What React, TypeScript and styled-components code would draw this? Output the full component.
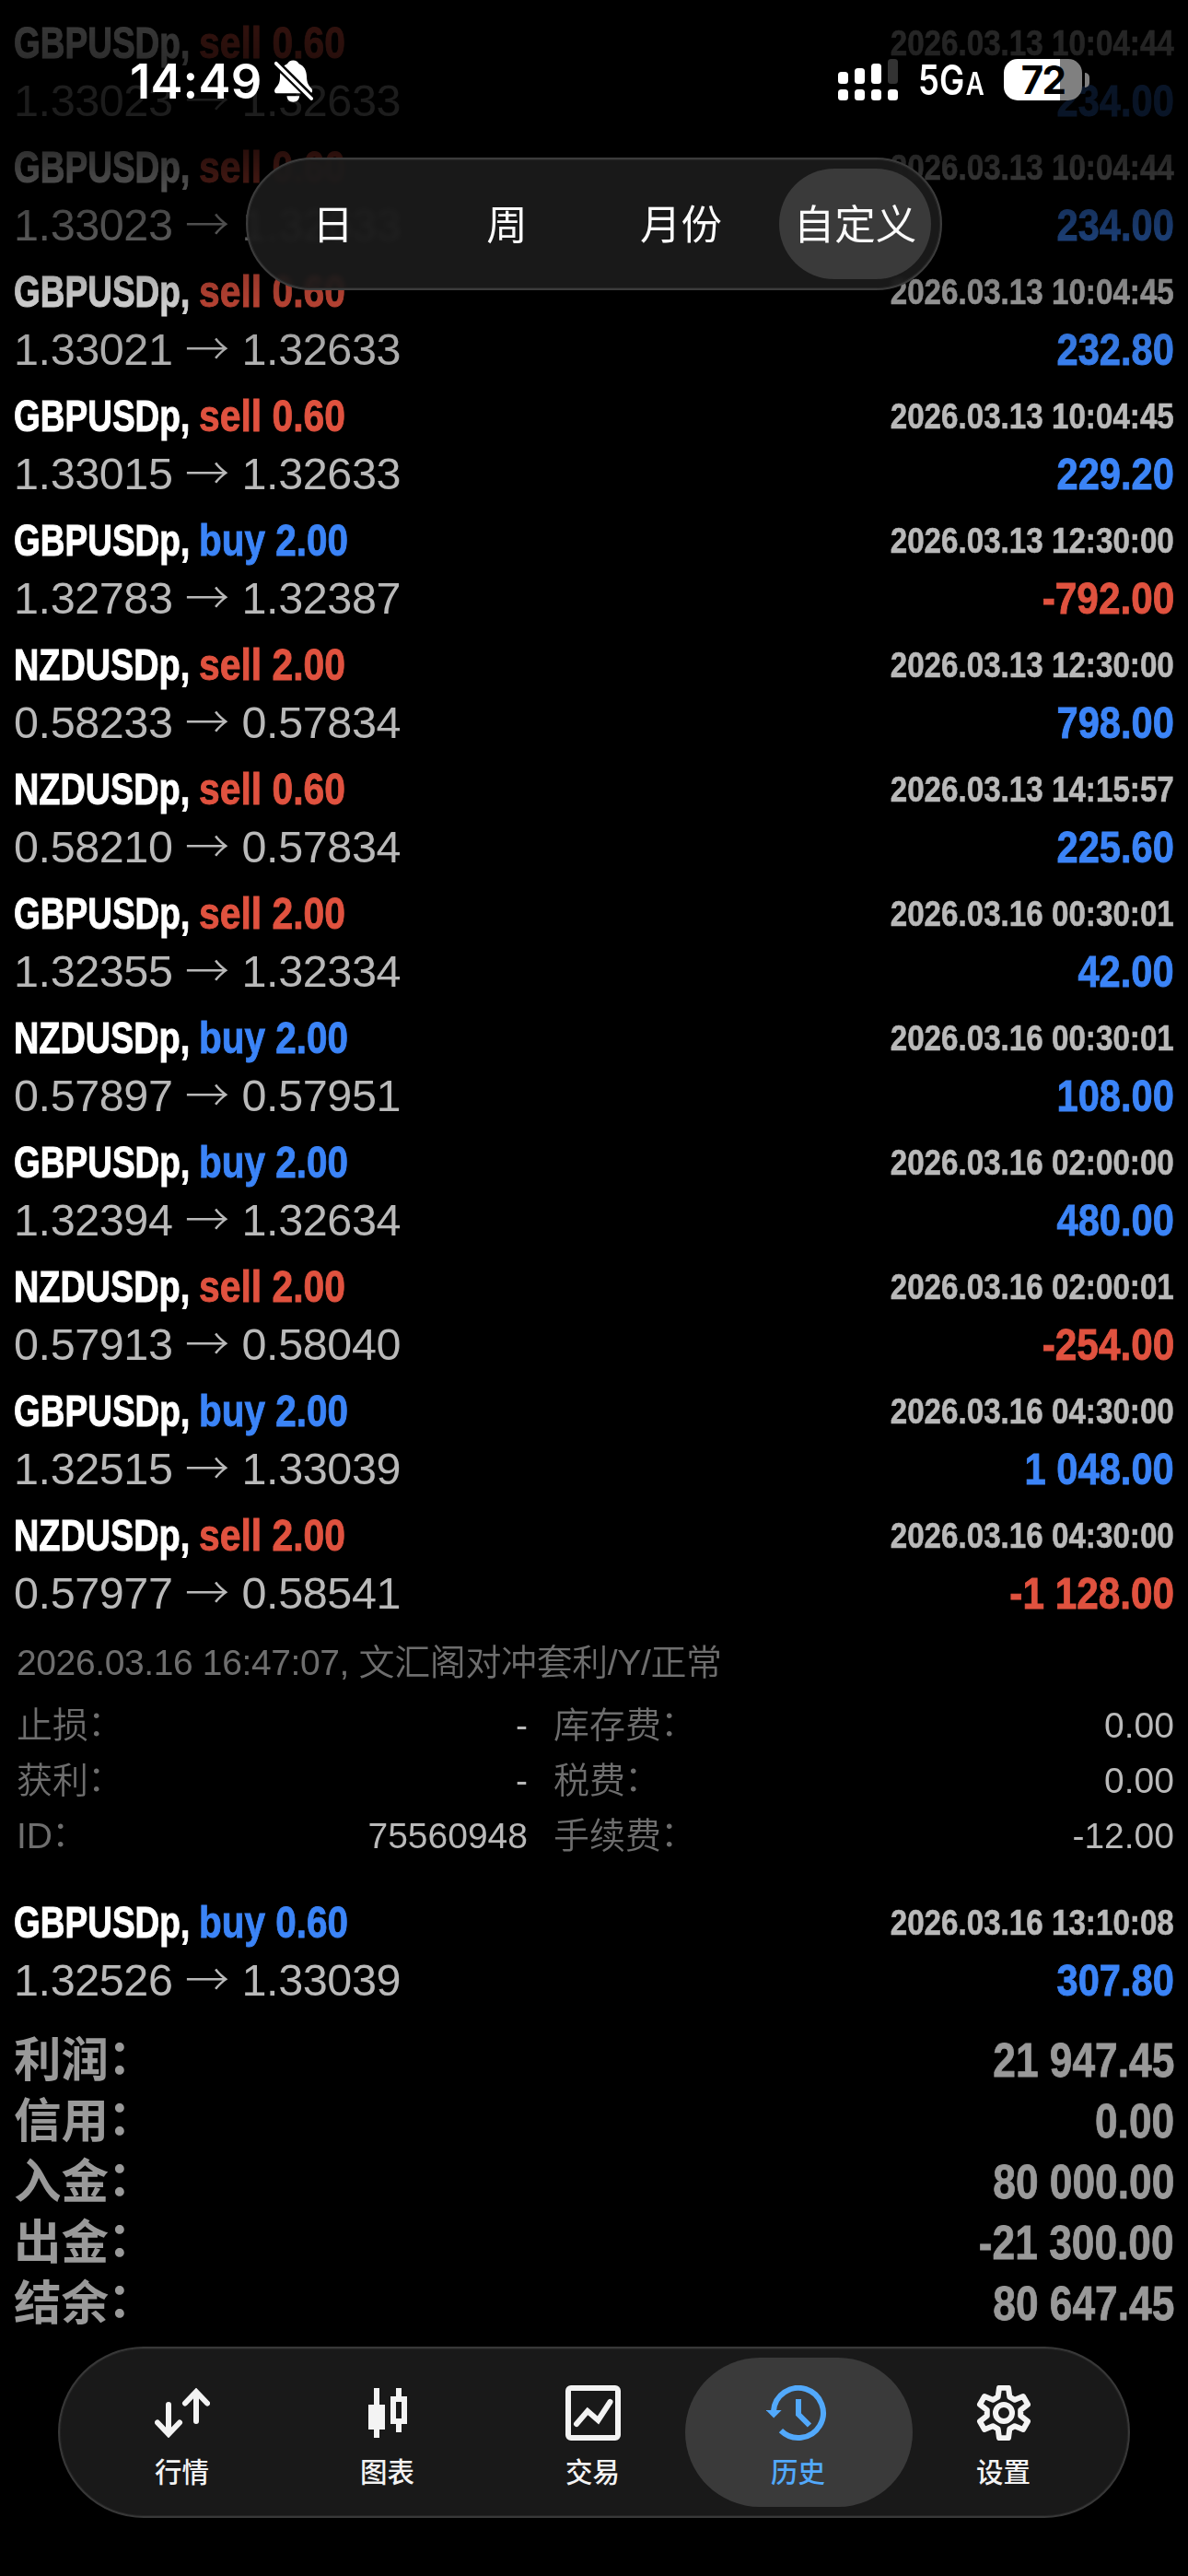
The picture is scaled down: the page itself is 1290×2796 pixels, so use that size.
import React from "react";
import styled, { createGlobalStyle } from "styled-components";

const sans = '"Liberation Sans", "Noto Sans CJK SC", sans-serif';
const cjk = '"Noto Sans CJK SC", sans-serif';
const system = 'Inter, "Noto Sans CJK SC", sans-serif';

const color = {
  sell: "#e0523f",
  buy: "#3b84f7",
  text: "#b9b9b9",
  label: "#6e6e6e",
  summary: "#999999",
  tab: "#f3f3f3",
  active: "#52a9fb",
};

const GlobalStyle = createGlobalStyle`
  body {
    margin: 0;
    background: #000;
  }
`;

const Screen = styled.div`
  position: relative;
  width: 1290px;
  height: 2796px;
  overflow: hidden;
  background: #000;
  font-family: ${sans};
`;

/* ---------- history list ---------- */

const History = styled.main`
  display: flex;
  flex-direction: column;
  padding: 14px 15px 0;
  mask-image: linear-gradient(
    to bottom,
    rgba(0, 0, 0, 0.24) 0,
    rgba(0, 0, 0, 0.18) 63px,
    rgba(0, 0, 0, 0.15) 110px,
    rgba(0, 0, 0, 0.19) 165px,
    rgba(0, 0, 0, 0.29) 198px,
    rgba(0, 0, 0, 0.48) 262px,
    rgba(0, 0, 0, 0.69) 300px,
    rgba(0, 0, 0, 0.83) 340px,
    rgba(0, 0, 0, 0.96) 396px,
    #000 430px
  );
`;

const Deal = styled.article`
  display: flex;
  flex-direction: column;
  height: 135px;
  padding-top: 1px;
  box-sizing: border-box;
`;

const Line = styled.div`
  display: flex;
  align-items: center;
  height: 63px;
  white-space: nowrap;
`;

const Condensed = styled.span<{ $scale: number }>`
  display: block;
  font-weight: 700;
  line-height: 63px;
  transform: scaleX(${(p) => p.$scale});
  transform-origin: left center;
`;

const SymbolCell = styled.div`
  width: 201px;
`;

const SymbolName = styled(Condensed)`
  width: max-content;
  font-size: 49px;
  color: #fff;
  -webkit-text-stroke: 1px #fff;
`;

const Side = styled(Condensed)<{ $tone: string }>`
  font-size: 49px;
  color: ${(p) => p.$tone};
  -webkit-text-stroke: 0.9px ${(p) => p.$tone};
`;

const Time = styled(Condensed)`
  margin-left: auto;
  font-size: 39.5px;
  color: ${color.text};
  -webkit-text-stroke: 0.6px ${color.text};
  transform-origin: right center;
`;

const Prices = styled.span`
  font-size: 48.5px;
  letter-spacing: -0.4px;
  line-height: 63px;
  color: ${color.text};
`;

const Arrow = styled.span`
  margin: 0 13.5px;
  font-family: ${cjk};
  font-size: 48px;
  font-weight: 300;
  line-height: 0;
  letter-spacing: 0;
`;

const Profit = styled(Condensed)<{ $tone: string }>`
  margin-left: auto;
  font-size: 49px;
  color: ${(p) => p.$tone};
  -webkit-text-stroke: 0.9px ${(p) => p.$tone};
  transform-origin: right center;
`;

/* ---------- expanded deal ---------- */

const Details = styled.section`
  height: 285px;
  padding: 0 0 0 3px;
  box-sizing: border-box;
  font-size: 39px;
  color: ${color.label};
`;

const Comment = styled.p`
  margin: 0 0 3px;
  height: 71px;
  line-height: 71px;
  font-weight: 350;
  letter-spacing: -0.38px;
  white-space: nowrap;
`;

const DetailGrid = styled.dl`
  display: grid;
  grid-template-columns: 555px 1fr;
  grid-auto-rows: 60px;
  column-gap: 28px;
  margin: 0;
  line-height: 60px;
`;

const DetailItem = styled.div`
  display: flex;
  justify-content: space-between;
`;

const DetailLabel = styled.dt`
  font-weight: 350;
`;

const DetailValue = styled.dd`
  margin: 0;
  color: ${color.text};
`;

const Colon = styled.span`
  margin-left: -1px;
  font-family: ${cjk};
  line-height: 0;
  vertical-align: 0.05em;
`;

/* ---------- totals ---------- */

const Totals = styled.section`
  padding-top: 14px;
`;

const TotalRow = styled.div`
  display: flex;
  justify-content: space-between;
  height: 66px;
  line-height: 66px;
  color: ${color.summary};
`;

const TotalLabel = styled.span`
  font-size: 51.5px;
  font-weight: 600;
`;

const TotalValue = styled(Condensed)`
  font-size: 52px;
  line-height: 66px;
  -webkit-text-stroke: 0.8px ${color.summary};
  transform-origin: right center;
`;

/* ---------- status bar ---------- */

const StatusBar = styled.header`
  position: absolute;
  top: 0;
  left: 0;
  right: 0;
  display: flex;
  justify-content: space-between;
  align-items: flex-start;
  padding: 64px 107px 0 141px;
  font-family: ${system};
  color: #fff;
`;

const Clock = styled.div`
  display: flex;
  align-items: center;
  height: 48px;
  gap: 14px;
  font-size: 52.5px;
  font-weight: 600;
  letter-spacing: 0.2px;
  line-height: 48px;
`;

const Indicators = styled.div`
  display: flex;
  align-items: center;
  height: 45px;
`;

const Network = styled.div`
  width: 92px;
  padding: 4px 0 0 22px;
  box-sizing: border-box;
`;

const NetworkText = styled.span`
  display: inline-block;
  font-size: 45px;
  font-weight: 560;
  line-height: 45px;
  transform: scaleX(0.81);
  transform-origin: left center;

  small {
    margin-left: 2px;
    font-size: 34px;
    font-weight: 640;
  }
`;

const Battery = styled.div`
  display: flex;
  align-items: center;
  gap: 3px;
  margin-left: 23px;
`;

const BatteryBody = styled.div`
  display: flex;
  align-items: center;
  justify-content: center;
  width: 85px;
  height: 45px;
  border-radius: 15px;
  background: linear-gradient(90deg, #fff 61px, #808080 61px);
  color: #000;
  font-size: 42px;
  font-weight: 700;
  letter-spacing: -1.6px;
`;

const BatteryTip = styled.div`
  width: 5px;
  height: 16px;
  border-radius: 0 8px 8px 0;
  background: #808080;
`;

/* ---------- period switch ---------- */

const PeriodSwitch = styled.nav`
  position: absolute;
  top: 171px;
  left: 267px;
  display: grid;
  grid-template-columns: repeat(4, 165px);
  column-gap: 24px;
  height: 144px;
  padding: 10px;
  box-sizing: border-box;
  border: 2px solid #3c3c3c;
  border-radius: 72px;
  background: rgba(28, 28, 28, 0.9);
  backdrop-filter: blur(3px);
  box-shadow: inset 0 0 0 1px #262626;
`;

const Period = styled.button<{ $active?: boolean }>`
  display: flex;
  align-items: center;
  justify-content: center;
  padding: 0 0 4px;
  border: 0;
  border-radius: 60px;
  background: ${(p) => (p.$active ? "#3a3a3a" : "transparent")};
  color: #fafafa;
  font: 400 44.5px/1 ${cjk};
  white-space: nowrap;
`;

/* ---------- tab bar ---------- */

const TabBar = styled.nav`
  position: absolute;
  top: 2547px;
  left: 63px;
  display: flex;
  width: 1164px;
  height: 186px;
  padding: 10px;
  box-sizing: border-box;
  border: 2px solid #383838;
  border-radius: 93px;
  background: #191919;
  box-shadow: inset 0 0 0 1px #242424;
`;

const Tab = styled.button<{ $active?: boolean }>`
  display: flex;
  flex: 0 0 247px;
  flex-direction: column;
  align-items: center;
  gap: 11px;
  margin: 0 -24px 0 0;
  padding: 27px 2px 0 0;
  border: 0;
  border-radius: 81px;
  background: ${(p) => (p.$active ? "#3a3a3a" : "transparent")};
  color: ${(p) => (p.$active ? color.active : color.tab)};
  font: 500 29.5px/36px ${cjk};
`;

const IconBox = styled.span`
  display: flex;
  align-items: center;
  justify-content: center;
  height: 66px;
`;

/* ---------- drawings ---------- */

const BellOff = () => (
  <svg width="42" height="47" viewBox="0 0 42 47">
    <path
      fill="#fff"
      d="M20.3.5C23.300 .5 25.500 2 26.700 4.200 32 6.400 34.800 11 35 18c.2 7 2 9.500 4.800 12.600C42.300 33.600 41 36.300 38 36.300H3C0 36.300-.8 33.500 1 31c3.500-4 5-6.500 5-13 0-7 3-11.600 8-13.800C15.200 2 17.300.5 20.300.5Z"
    />
    <path fill="#fff" d="M13.500 39.300h13.600c0 3.700-3 6.500-6.800 6.500s-6.800-2.800-6.800-6.500Z" />
    <path stroke="#000" strokeWidth="8.500" d="M0 2 42 43.500" />
    <path stroke="#fff" strokeWidth="3.800" strokeLinecap="round" d="M1.800 3.800 40.200 42" />
  </svg>
);

const Signal = () => (
  <svg width="65" height="45" viewBox="0 0 65 45" fill="#fff">
    <rect x="0" y="14" width="11" height="13" rx="3.500" />
    <rect x="18" y="10" width="11" height="17" rx="3.500" />
    <rect x="36" y="5" width="11" height="22" rx="3.500" />
    <rect x="54" y="0" width="11" height="27" rx="3.500" fill="#333" />
    {[0, 18, 36, 54].map((x) => (
      <rect key={x} x={x} y="33" width="11" height="12" rx="3.500" />
    ))}
  </svg>
);

const QuotesIcon = () => (
  <svg width="60" height="54" viewBox="0 0 60 54" fill="none" stroke="currentColor" strokeWidth="6" strokeLinecap="round">
    <path d="M15 18v30M3 37.500 15 50l12-12.500M45 36V6M33 16.500 45 4l12 12.500" />
  </svg>
);

const ChartIcon = () => (
  <svg width="42" height="54" viewBox="0 0 42 54" fill="currentColor">
    <path d="M6 0h6v18h6v27h-6v9H6v-9H0V18h6z" />
    <path fillRule="evenodd" d="M30 0h6v9h6v30h-6v9h-6v-9h-6V9h6zM30 15v18h6V15z" />
  </svg>
);

const TradeIcon = () => (
  <svg width="60" height="60" viewBox="0 0 60 60" fill="none" stroke="currentColor" strokeWidth="6">
    <rect x="3" y="3" width="54" height="54" rx="3" />
    <path strokeLinecap="round" d="M12 42 24 28 35.500 38 48.500 18" />
  </svg>
);

const HistoryIcon = () => (
  <svg width="70" height="60" viewBox="0 0 70 60" fill="none" stroke="currentColor" strokeWidth="6">
    <path d="M8 28A27 27 0 1 1 15.900 49.100" />
    <path d="M35 15v16.500l12 12" />
    <path fill="currentColor" stroke="none" d="M-.3 27h17L8.200 35.500z" />
  </svg>
);

const gearOutline = [0, 60, 120, 180, 240, 300]
  .flatMap((turn) =>
    [
      [-20, 18.5],
      [-10.5, 27.6],
      [10.5, 27.6],
      [20, 18.5],
    ].map(([offset, radius]) => {
      const a = ((turn + offset) * Math.PI) / 180;
      return `${(30 + radius * Math.sin(a)).toFixed(2)},${(30 - radius * Math.cos(a)).toFixed(2)}`;
    })
  )
  .join(" ");

const SettingsIcon = () => (
  <svg width="60" height="60" viewBox="0 0 60 60" fill="none" stroke="currentColor" strokeWidth="6">
    <polygon points={gearOutline} strokeLinejoin="round" />
    <circle cx="30" cy="30" r="9" />
  </svg>
);

/* ---------- data ---------- */

type DealData = {
  symbol: "GBPUSDp" | "NZDUSDp";
  side: "buy" | "sell";
  volume: string;
  time: string;
  open: string;
  close: string;
  profit: string;
};

const deal = (
  symbol: DealData["symbol"],
  side: DealData["side"],
  volume: string,
  time: string,
  open: string,
  close: string,
  profit: string
): DealData => ({ symbol, side, volume, time, open, close, profit });

const deals: DealData[] = [
  deal("GBPUSDp", "sell", "0.60", "2026.03.13 10:04:44", "1.33023", "1.32633", "234.00"),
  deal("GBPUSDp", "sell", "0.60", "2026.03.13 10:04:44", "1.33023", "1.32633", "234.00"),
  deal("GBPUSDp", "sell", "0.60", "2026.03.13 10:04:45", "1.33021", "1.32633", "232.80"),
  deal("GBPUSDp", "sell", "0.60", "2026.03.13 10:04:45", "1.33015", "1.32633", "229.20"),
  deal("GBPUSDp", "buy", "2.00", "2026.03.13 12:30:00", "1.32783", "1.32387", "-792.00"),
  deal("NZDUSDp", "sell", "2.00", "2026.03.13 12:30:00", "0.58233", "0.57834", "798.00"),
  deal("NZDUSDp", "sell", "0.60", "2026.03.13 14:15:57", "0.58210", "0.57834", "225.60"),
  deal("GBPUSDp", "sell", "2.00", "2026.03.16 00:30:01", "1.32355", "1.32334", "42.00"),
  deal("NZDUSDp", "buy", "2.00", "2026.03.16 00:30:01", "0.57897", "0.57951", "108.00"),
  deal("GBPUSDp", "buy", "2.00", "2026.03.16 02:00:00", "1.32394", "1.32634", "480.00"),
  deal("NZDUSDp", "sell", "2.00", "2026.03.16 02:00:01", "0.57913", "0.58040", "-254.00"),
  deal("GBPUSDp", "buy", "2.00", "2026.03.16 04:30:00", "1.32515", "1.33039", "1 048.00"),
  deal("NZDUSDp", "sell", "2.00", "2026.03.16 04:30:00", "0.57977", "0.58541", "-1 128.00"),
];

const lastDeal = deal("GBPUSDp", "buy", "0.60", "2026.03.16 13:10:08", "1.32526", "1.33039", "307.80");

const details = [
  ["止损", "-"],
  ["库存费", "0.00"],
  ["获利", "-"],
  ["税费", "0.00"],
  ["ID", "75560948"],
  ["手续费", "-12.00"],
];

const totals = [
  ["利润", "21 947.45"],
  ["信用", "0.00"],
  ["入金", "80 000.00"],
  ["出金", "-21 300.00"],
  ["结余", "80 647.45"],
];

const periods = ["日", "周", "月份", "自定义"];

const tabs = [
  { label: "行情", icon: <QuotesIcon /> },
  { label: "图表", icon: <ChartIcon /> },
  { label: "交易", icon: <TradeIcon /> },
  { label: "历史", icon: <HistoryIcon />, active: true },
  { label: "设置", icon: <SettingsIcon /> },
];

const symbolScale = { GBPUSDp: 0.755, NZDUSDp: 0.772 };
const sideScale = { sell: 0.834, buy: 0.826 };

const DealRow = ({ data }: { data: DealData }) => {
  const loss = data.profit.startsWith("-");
  return (
    <Deal>
      <Line>
        <SymbolCell>
          <SymbolName $scale={symbolScale[data.symbol]}>{data.symbol},</SymbolName>
        </SymbolCell>
        <Side $scale={sideScale[data.side]} $tone={color[data.side]}>
          {data.side} {data.volume}
        </Side>
        <Time $scale={0.84}>{data.time}</Time>
      </Line>
      <Line>
        <Prices>
          {data.open}
          <Arrow>→</Arrow>
          {data.close}
        </Prices>
        <Profit $scale={loss ? 0.863 : 0.85} $tone={loss ? color.sell : color.buy}>
          {data.profit}
        </Profit>
      </Line>
    </Deal>
  );
};

export default function App() {
  return (
    <Screen>
      <GlobalStyle />
      <History>
        {deals.map((d, i) => (
          <DealRow key={i} data={d} />
        ))}
        <Details>
          <Comment>2026.03.16 16:47:07, 文汇阁对冲套利/Y/正常</Comment>
          <DetailGrid>
            {details.map(([label, value]) => (
              <DetailItem key={label}>
                <DetailLabel>
                  {label}
                  <Colon>：</Colon>
                </DetailLabel>
                <DetailValue>{value}</DetailValue>
              </DetailItem>
            ))}
          </DetailGrid>
        </Details>
        <DealRow data={lastDeal} />
        <Totals>
          {totals.map(([label, value]) => (
            <TotalRow key={label}>
              <TotalLabel>
                {label}
                <Colon>：</Colon>
              </TotalLabel>
              <TotalValue $scale={0.852}>{value}</TotalValue>
            </TotalRow>
          ))}
        </Totals>
      </History>

      <StatusBar>
        <Clock>
          14:49
          <BellOff />
        </Clock>
        <Indicators>
          <Signal />
          <Network>
            <NetworkText>
              5G<small>A</small>
            </NetworkText>
          </Network>
          <Battery>
            <BatteryBody>72</BatteryBody>
            <BatteryTip />
          </Battery>
        </Indicators>
      </StatusBar>

      <PeriodSwitch>
        {periods.map((p) => (
          <Period key={p} $active={p === "自定义"}>
            {p}
          </Period>
        ))}
      </PeriodSwitch>

      <TabBar>
        {tabs.map((t) => (
          <Tab key={t.label} $active={t.active}>
            <IconBox>{t.icon}</IconBox>
            {t.label}
          </Tab>
        ))}
      </TabBar>
    </Screen>
  );
}
